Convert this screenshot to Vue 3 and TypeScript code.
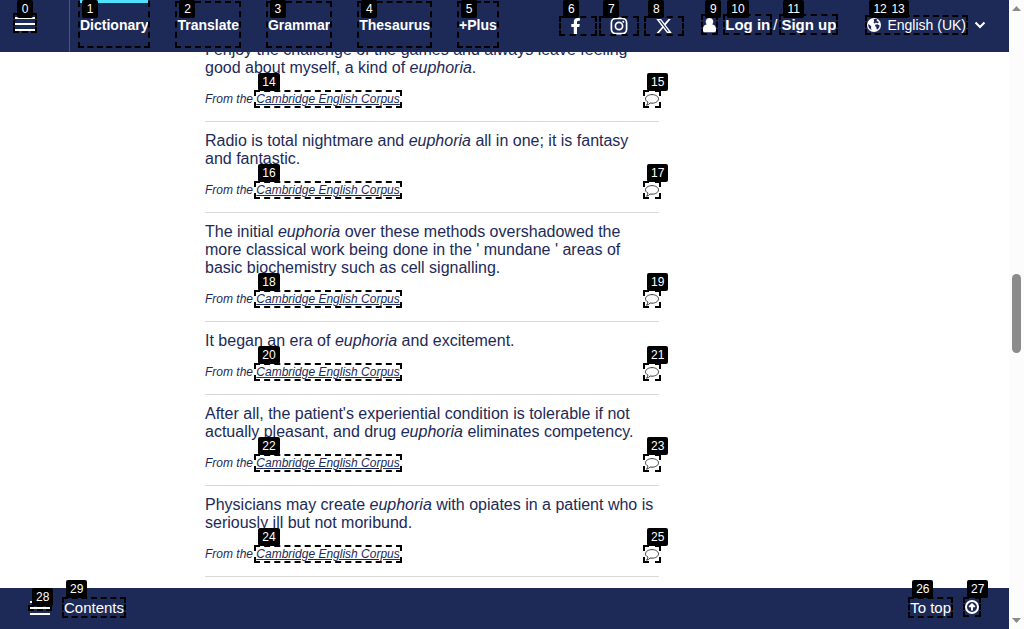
<script setup lang="ts">
interface Part {
  text: string
  em?: boolean
}
interface Example {
  parts: Part[]
  linkTag: number
  noteTag: number
}

const keyword: Part = { text: 'euphoria', em: true }

const navItems: string[] = ['Dictionary', 'Translate', 'Grammar', 'Thesaurus', '+Plus']

const examples: Example[] = [
  {
    parts: [{ text: 'I enjoy the challenge of the games and always leave feeling good about myself, a kind of ' }, keyword, { text: '.' }],
    linkTag: 14,
    noteTag: 15,
  },
  {
    parts: [{ text: 'Radio is total nightmare and ' }, keyword, { text: ' all in one; it is fantasy and fantastic.' }],
    linkTag: 16,
    noteTag: 17,
  },
  {
    parts: [
      { text: 'The initial ' },
      keyword,
      { text: " over these methods overshadowed the more classical work being done in the ' mundane ' areas of basic biochemistry such as cell signalling." },
    ],
    linkTag: 18,
    noteTag: 19,
  },
  {
    parts: [{ text: 'It began an era of ' }, keyword, { text: ' and excitement.' }],
    linkTag: 20,
    noteTag: 21,
  },
  {
    parts: [
      { text: "After all, the patient's experiential condition is tolerable if not actually pleasant, and drug " },
      keyword,
      { text: ' eliminates competency.' },
    ],
    linkTag: 22,
    noteTag: 23,
  },
  {
    parts: [{ text: 'Physicians may create ' }, keyword, { text: ' with opiates in a patient who is seriously ill but not moribund.' }],
    linkTag: 24,
    noteTag: 25,
  },
]
</script>

<template>
  <div class="page">
    <div class="view">
      <header class="top">
        <div class="menu-area">
          <button type="button" class="menu mark" aria-label="Open site menu">
            <span class="bar"></span><span class="bar"></span><span class="bar"></span>
            <span class="tag">0</span>
          </button>
        </div>
        <nav class="nav" aria-label="Site">
          <a v-for="(item, i) in navItems" :key="item" href="#" class="nav-link mark" :class="{ current: i === 0 }">
            {{ item }}<span class="tag">{{ i + 1 }}</span>
          </a>
        </nav>
        <div class="social">
          <a href="#" class="social-link facebook mark" aria-label="Facebook">
            <svg width="10" height="16" viewBox="0 0 10 16"><path fill="currentColor" d="M2.800 16V9H.300V6.100h2.500V4C2.800 1.400 4.300 0 6.700 0c1.100 0 2.200.2 2.200.2v2.500H7.600C6.400 2.700 6 3.500 6 4.200v1.900h2.800L8.300 9H6v7z" /></svg>
            <span class="tag">6</span>
          </a>
          <a href="#" class="social-link instagram mark" aria-label="Instagram">
            <svg width="18" height="18" viewBox="0 0 18 18" fill="none" stroke="currentColor" stroke-width="1.7"><rect x="1.400" y="1.400" width="15.200" height="15.200" rx="4.300" /><circle cx="9" cy="9" r="3.600" /><circle cx="13.300" cy="4.700" r="1" fill="currentColor" stroke="none" /></svg>
            <span class="tag">7</span>
          </a>
          <a href="#" class="social-link mark" aria-label="X">
            <svg width="16" height="14" viewBox="1 0 22 19.500"><path fill="currentColor" d="M18.240 0h3.310l-7.230 8.260L22.830 19.500h-6.660l-5.210-6.820-5.970 6.820H1.680l7.730-8.840L1.250 0h6.830l4.710 6.230zm-1.160 17.520h1.830L7.080 1.880H5.120z" /></svg>
            <span class="tag">8</span>
          </a>
        </div>
        <div class="account">
          <a href="#" class="user mark" aria-label="Account">
            <svg width="13" height="15" viewBox="0 0 13 15"><path fill="currentColor" d="M6.500 0a3.900 3.900 0 0 1 2.900 6.500c2.100.3 3.600 1.900 3.600 4.300v1.700c0 1-.7 1.700-1.700 1.700H1.700C.7 14.200 0 13.500 0 12.500v-1.700c0-2.400 1.500-4 3.600-4.300A3.900 3.900 0 0 1 6.500 0z" /></svg>
            <span class="tag">9</span>
          </a>
          <a href="#" class="sign mark">Log in<span class="tag">10</span></a>
          <span class="slash">/</span>
          <a href="#" class="sign mark">Sign up<span class="tag">11</span></a>
        </div>
        <button type="button" class="lang">
          <span class="lang-box mark">
            <svg width="14" height="14" viewBox="0 0 14 14"><circle cx="7" cy="7" r="7" fill="currentColor" /><path fill="#1d2a57" d="M6.600 1.300l2.200-.5 1.400.700-.7 1.400 1.900.5.300 1.400-1.500.5-1.300-.9-1 1.200-1.400-.8.700-1.500zM8.300 6.700l2-.4 2.300 1.300-.4 2-1.700 1.800-1-.4-.2-1.900-1.300-1.200zM1.100 6.200l1.700.8 1.600 1.700-.5 1.200.8 1.900-1-.3C2.200 10.600 1.200 8.700 1.100 6.200z" /></svg>
            <span class="tag">12</span>
            <span class="lang-name">English (UK)<span class="tag">13</span></span>
          </span>
          <svg width="12" height="8" viewBox="0 0 12 8" fill="none" stroke="currentColor" stroke-width="2"><path d="M1.500 1.500L6 6l4.500-4.500" /></svg>
        </button>
      </header>

      <main class="content">
        <ul class="examples">
          <li v-for="ex in examples" :key="ex.linkTag" class="example">
            <p class="sentence">
              <template v-for="(part, i) in ex.parts" :key="i"><em v-if="part.em">{{ part.text }}</em><template v-else>{{ part.text }}</template></template>
            </p>
            <div class="source">
              <span>From the <a href="#" class="corpus mark"><u>Cambridge English Corpus</u><span class="tag">{{ ex.linkTag }}</span></a></span>
              <button type="button" class="note mark" aria-label="Send feedback on this example">
                <svg width="14" height="14" viewBox="0 0 14 14" fill="#fff" stroke="#3c3c3c" stroke-width="1"><path d="M3 10.200C1.500 9.400.500 8.200.500 6.900.500 4.500 3.400 2.600 7 2.600s6.500 1.900 6.500 4.300-2.900 4.300-6.500 4.300c-.7 0-1.300-.1-1.900-.2-.8 1.100-1.900 1.900-3.600 2.200.8-.8 1.300-1.800 1.500-3z" /></svg>
                <span class="tag">{{ ex.noteTag }}</span>
              </button>
            </div>
          </li>
        </ul>
      </main>

      <footer class="bottom">
        <button type="button" class="toc" aria-label="Open contents">
          <span class="bar"></span>
          <span class="bar mark"><span class="tag">28</span></span>
          <span class="bar"></span>
        </button>
        <a href="#" class="foot-link contents mark">Contents<span class="tag">29</span></a>
        <a href="#" class="foot-link to-top mark">To top<span class="tag">26</span></a>
        <a href="#" class="up mark" aria-label="Back to top">
          <svg width="14" height="16" viewBox="0 0 14 16" fill="none" stroke="currentColor" stroke-width="2"><circle cx="7" cy="8" r="6" /><path d="M7 11.500V5.500M4.300 8L7 5.300 9.700 8" /></svg>
          <span class="tag">27</span>
        </a>
      </footer>
    </div>

    <div class="scroll" aria-hidden="true">
      <svg width="9" height="5" viewBox="0 0 9 5"><path fill="#8b8b8b" d="M4.500 0L9 5H0z" /></svg>
      <div class="track"><div class="thumb"></div></div>
      <svg width="9" height="5" viewBox="0 0 9 5"><path fill="#8b8b8b" d="M4.500 5L0 0h9z" /></svg>
    </div>
  </div>
</template>

<style>
body {
  margin: 0;
}
</style>

<style scoped>
.page {
  display: flex;
  height: 100vh;
  overflow: hidden;
  background: #fff;
  color: #1d2a57;
  font-family: "Liberation Sans", Arial, sans-serif;
}
.view {
  flex: 1;
  min-width: 0;
  display: flex;
  flex-direction: column;
}
a {
  color: inherit;
  text-decoration: none;
}
button {
  border: 0;
  margin: 0;
  padding: 0;
  background: none;
  color: inherit;
  font: inherit;
  cursor: pointer;
}
svg {
  display: block;
  flex: none;
}

/* numbered hint overlay */
.mark {
  position: relative;
}
.mark::after {
  content: "";
  position: absolute;
  inset: -2px;
  border: 2px dashed #000;
  pointer-events: none;
}
.tag {
  position: absolute;
  z-index: 2;
  left: 2px;
  top: -19px;
  box-sizing: border-box;
  min-width: 16px;
  padding: 0 4px;
  border-radius: 2px;
  background: #000;
  color: #fff;
  font-size: 12px;
  font-style: normal;
  font-weight: 400;
  line-height: 18px;
  text-align: center;
}

.top {
  flex: none;
  position: relative;
  z-index: 2;
  display: flex;
  align-items: flex-start;
  height: 52px;
  background: #1d2a57;
  color: #fff;
}
.menu-area {
  box-sizing: border-box;
  width: 70px;
  height: 52px;
  padding: 15px;
  border-right: 1px solid #4a5579;
}
.bar {
  display: block;
  width: 20px;
  height: 2px;
  background: #fff;
}
.menu {
  display: flex;
  flex-direction: column;
  gap: 4px;
  padding: 2px 0 0;
}
.menu .tag {
  top: -15px;
}
.nav {
  display: flex;
  gap: 29px;
  margin: 3px 0 0 10px;
}
.nav-link {
  height: 43px;
  font-size: 14px;
  font-weight: 700;
  line-height: 45px;
}
.nav-link.current::before {
  content: "";
  position: absolute;
  z-index: 1;
  left: 0;
  right: 0;
  top: -3px;
  height: 3px;
  background: #4fe0fc;
}
.nav-link .tag {
  top: -3px;
}
.social {
  display: flex;
  margin: 18px 0 0 auto;
}
.social-link {
  display: flex;
  align-items: center;
  justify-content: center;
  width: 36px;
  height: 16px;
  margin-left: 9px;
}
.facebook {
  box-sizing: border-box;
  width: 34px;
  padding-right: 4px;
}
.instagram {
  margin-left: 6px;
}
.social-link .tag {
  top: -18px;
}
.account {
  display: flex;
  margin: 16px 0 0 21px;
  font-size: 15px;
  line-height: 17px;
}
.user {
  height: 15px;
  padding-top: 2px;
  margin-right: 9px;
}
.sign {
  font-weight: 700;
}
.slash {
  padding: 0 4px 0 3px;
}
.account .tag {
  top: -16px;
}
.lang {
  display: flex;
  align-items: center;
  gap: 8px;
  margin: 17px 23px 0 31px;
  font-size: 14px;
  line-height: 16px;
}
.lang-box {
  display: flex;
  align-items: center;
  gap: 6px;
}
.lang-name {
  position: relative;
}
.lang-box .tag {
  top: -17px;
}
.lang-name .tag {
  left: 0;
}

.content {
  flex: 1;
  min-height: 0;
  overflow: hidden;
}
/* the list is scrolled so that its first sentence runs under the header */
.examples {
  width: 45%;
  margin: -21px 0 0 205px;
  padding: 0;
  list-style: none;
}
.example {
  padding: 10px 0 13px;
  border-bottom: 1px solid #d8d8d8;
}
.sentence {
  margin: 0;
  font-size: 16px;
  line-height: 18px;
}
.source {
  display: flex;
  justify-content: space-between;
  margin-top: 13px;
  padding: 2px 0;
  font-size: 12px;
  font-style: italic;
  line-height: 14px;
}
.corpus {
  display: inline-block;
}
.note {
  width: 14px;
  height: 14px;
}

.bottom {
  flex: none;
  position: relative;
  z-index: 2;
  display: flex;
  align-items: flex-start;
  height: 41px;
  box-sizing: border-box;
  padding: 11px 30px 0;
  background: #1d2a57;
  color: #fff;
  font-size: 15px;
  line-height: 17px;
}
.toc {
  display: flex;
  flex-direction: column;
  gap: 4px;
  padding-top: 2px;
  margin-right: 14px;
}
.to-top {
  margin: 0 14px 0 auto;
}

.scroll {
  flex: none;
  display: flex;
  flex-direction: column;
  align-items: center;
  box-sizing: border-box;
  width: 15px;
  padding: 6px 0;
  background: #fcfcfc;
}
.track {
  flex: 1;
  display: flex;
  flex-direction: column;
  align-items: center;
  padding-top: 263px;
}
.thumb {
  width: 9px;
  height: 79px;
  border-radius: 5px;
  background: #8b8b8b;
}
</style>
